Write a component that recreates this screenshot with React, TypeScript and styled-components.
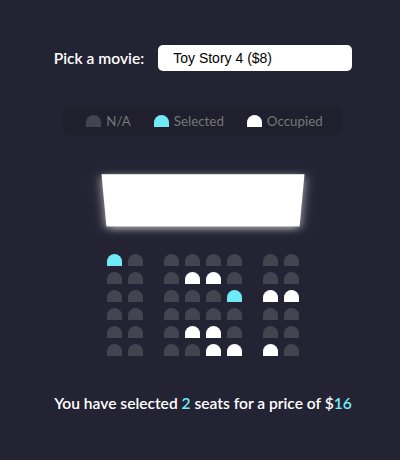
import React from "react";
import styled, { createGlobalStyle } from "styled-components";

const GlobalStyle = createGlobalStyle`
  * { box-sizing: border-box; }
  html, body { margin: 0; padding: 0; }
  body {
    background-color: #242333;
    color: #fff;
    font-family: Lato, "Noto Sans", sans-serif;
    font-weight: 600;
  }
`;

const Page = styled.div`
  min-height: 460px;
  display: flex;
  flex-direction: column;
  align-items: center;
  padding: 45px 0 0 6px;
`;

const MovieRow = styled.div`
  display: flex;
  align-items: center;
  height: 26px;
`;

const Label = styled.label`
  font-size: 15.6px;
  margin-right: 4px;
`;

const Select = styled.select`
  appearance: none;
  -webkit-appearance: none;
  background-color: #fff;
  color: #000;
  border: 0;
  border-radius: 5px;
  font-family: "Liberation Sans", Arial, sans-serif;
  font-weight: 400;
  font-size: 14px;
  margin-left: 10px;
  padding: 5px 15px;
  height: 26px;
  width: 194px;
  outline: none;
`;

const Showcase = styled.ul`
  list-style: none;
  display: flex;
  justify-content: space-between;
  background: rgba(0, 0, 0, 0.1);
  padding: 5px 10px;
  margin: 36px 0 16px;
  border-radius: 5px;
  color: #777;
  font-weight: 400;
`;

const LegendItem = styled.li`
  display: flex;
  align-items: center;
  justify-content: center;
  margin: 0 10px;
`;

const LegendText = styled.small`
  margin-left: 2px;
  font-size: 13.33px;
`;

type SeatKind = "n" | "s" | "o";

const seatColor = (k: SeatKind) =>
  k === "s" ? "#6feaf6" : k === "o" ? "#ffffff" : "#444451";

const Seat = styled.div<{ $kind: SeatKind }>`
  background-color: ${(p) => seatColor(p.$kind)};
  height: 12px;
  width: 15px;
  margin: 3px;
  border-top-left-radius: 10px;
  border-top-right-radius: 10px;

  &:nth-of-type(2) {
    margin-right: 18px;
  }
  &:nth-last-of-type(2) {
    margin-left: 18px;
  }
`;

const LegendSeat = styled.div<{ $kind: SeatKind }>`
  background-color: ${(p) => seatColor(p.$kind)};
  height: 12px;
  width: 15px;
  margin: 3px;
  border-top-left-radius: 10px;
  border-top-right-radius: 10px;
`;

const Theatre = styled.div`
  perspective: 1000px;
  margin-bottom: 30px;
`;

const Screen = styled.div`
  background-color: #fff;
  height: 70px;
  width: 100%;
  margin: 15px 0;
  transform: rotateX(-45deg);
  box-shadow: 0 3px 10px rgba(255, 255, 255, 0.7);
`;

const Row = styled.div`
  display: flex;
`;

const Summary = styled.p`
  margin: 5px 0;
  font-size: 15.6px;
`;

const Count = styled.span`
  color: #6feaf6;
`;

const rows: SeatKind[][] = [
  ["s", "n", "n", "n", "n", "n", "n", "n"],
  ["n", "n", "n", "o", "o", "n", "n", "n"],
  ["n", "n", "n", "n", "n", "s", "o", "o"],
  ["n", "n", "n", "n", "n", "n", "n", "n"],
  ["n", "n", "n", "o", "o", "n", "n", "n"],
  ["n", "n", "n", "n", "o", "o", "o", "n"],
];

export default function App() {
  return (
    <>
      <GlobalStyle />
      <Page>
        <MovieRow>
          <Label htmlFor="movie">Pick a movie:</Label>
          <Select id="movie" defaultValue="8">
            <option value="10">Avengers: Endgame ($10)</option>
            <option value="12">Joker ($12)</option>
            <option value="8">Toy Story 4 ($8)</option>
            <option value="9">The Lion King ($9)</option>
          </Select>
        </MovieRow>

        <Showcase>
          <LegendItem>
            <LegendSeat $kind="n" />
            <LegendText>N/A</LegendText>
          </LegendItem>
          <LegendItem>
            <LegendSeat $kind="s" />
            <LegendText>Selected</LegendText>
          </LegendItem>
          <LegendItem>
            <LegendSeat $kind="o" />
            <LegendText>Occupied</LegendText>
          </LegendItem>
        </Showcase>

        <Theatre>
          <Screen />
          {rows.map((r, i) => (
            <Row key={i}>
              {r.map((k, j) => (
                <Seat key={j} $kind={k} />
              ))}
            </Row>
          ))}
        </Theatre>

        <Summary>
          You have selected <Count>2</Count> seats for a price of $
          <Count>16</Count>
        </Summary>
      </Page>
    </>
  );
}
